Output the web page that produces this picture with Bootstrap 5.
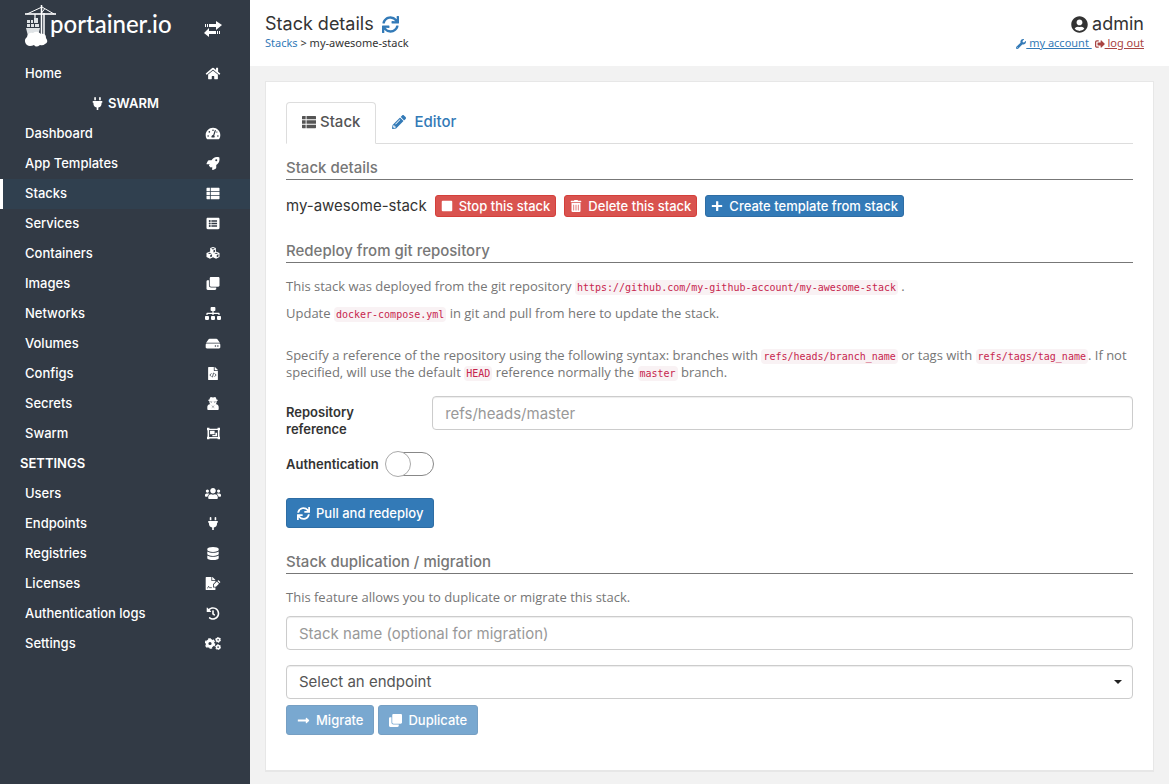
<!DOCTYPE html>
<html lang="en">
<head>
<meta charset="utf-8">
<meta name="viewport" content="width=device-width, initial-scale=1">
<title>Portainer - Stack details</title>
<link href="https://cdn.jsdelivr.net/npm/bootstrap@5.3.0/dist/css/bootstrap.min.css" rel="stylesheet">
<style>
  body { font-family: Inter, "Noto Sans", sans-serif; font-size: 13px; line-height: 17px; color: #333; background: #f2f2f2; }
  .ico { width: 1em; height: 1em; fill: currentColor; flex: none; overflow: visible; }
  .ico-wide { width: 16px; }
  a { color: #337ab7; }

  .side { width: 250px; flex: none; background: #323a45; color: #fff; font-weight: 500; }
  .side-head { height: 59px; padding: 3px 28px 0 24px; }
  .brand { color: #fff; }
  .brand svg { width: 33px; height: 45px; }
  .brand-text { font-family: Lato, sans-serif; font-size: 24px; line-height: 30px; margin: -4px 0 0 -7px; }
  .side .nav-link { height: 30px; padding: 0 22px 2px 22px; color: #fff; border-left: 3px solid transparent; }
  .side .nav-link.active { background: #30404f; border-left-color: #fff; }
  .nav-ico { width: 30px; display: flex; justify-content: center; }
  .side-title { height: 30px; padding-bottom: 2px; font-weight: 600; }

  .top { height: 66px; padding: 13px 25px 0 15px; background: #fff; }
  .top-title { font-size: 18px; line-height: 22px; }
  .top-sub { font-family: "Noto Sans", sans-serif; font-size: 11px; line-height: 16px; }
  .top-title .ico { font-size: 17px; }
  .top-sub .ico { font-size: 10px; }
  .text-logout { color: #a94442; }

  .panel { margin: 15px; padding: 20px 20px 35px; background: #fff; border: 1px solid #e7e7e7; border-bottom-width: 2px; }
  .nav-tabs { --bs-nav-tabs-border-color: #ddd; --bs-nav-tabs-link-active-color: #555; --bs-nav-tabs-link-active-border-color: #ddd #ddd #fff; }
  .nav-tabs .nav-link { font-size: 15px; line-height: 20px; padding: 9px 15px 11px; font-weight: 500; color: #337ab7; border-radius: 4px 4px 0 0; }
  .nav-tabs .nav-link.active { color: #555; }
  .nav-tabs .ico { font-size: 14px; }
  .sect { font-size: 15px; line-height: 20px; color: #777; font-weight: 500; padding-bottom: 1px; border-bottom: 1px solid #777; margin: 24px 0 15px; }
  .sect-first { margin-top: 14px; }
  .note { font-family: "Open Sans", "Noto Sans", sans-serif; color: #767676; margin: 0 0 10px; }
  .note-gap { margin: 25px 0 15px; }
  code { font-family: "DejaVu Sans Mono", monospace; font-size: 10px; line-height: 10px; color: #c7254e; background: #f9f2f4; padding: 2px; border-radius: 4px; }
  .stack-name { font-size: 15px; line-height: 22px; }
  .btn { --bs-btn-font-size: 13px; --bs-btn-line-height: 18px; --bs-btn-border-radius: 3px; --bs-btn-font-weight: 500; --bs-btn-padding-y: 5px; --bs-btn-padding-x: 10px; gap: 6px; }
  .btn-mini { --bs-btn-padding-y: 1px; --bs-btn-padding-x: 5px; }
  .btn-mini .ico { font-size: 12px; }
  .btn-danger { --bs-btn-bg: #d9534f; --bs-btn-border-color: #d43f3a; }
  .btn-primary { --bs-btn-bg: #337ab7; --bs-btn-border-color: #2e6da4; --bs-btn-disabled-bg: #337ab7; --bs-btn-disabled-border-color: #2e6da4; }
  .field-row { --bs-gutter-x: 30px; }
  .field-label { font-weight: 600; }
  .auth-row { margin: 13px 0 21px; gap: 6px; }
  .form-control, .form-select { height: 34px; padding: 6px 12px; font-size: 15px; line-height: 20px; color: #555; border: 1px solid #ccc; border-radius: 4px; box-shadow: inset 0 1px 1px rgba(0,0,0,.075); }
  .form-control { margin-bottom: 15px; }
  .field-row .form-control { margin-bottom: 0; }
  .form-control::placeholder { color: #999; }
  .form-select { background-image: url("data:image/svg+xml,%3Csvg xmlns='http://www.w3.org/2000/svg' viewBox='0 0 8 4'%3E%3Cpath fill='%23222' d='M0 0h8L4 4z'/%3E%3C/svg%3E"); background-size: 8px 4px; background-position: right 10px center; margin-bottom: 6px; }
  .toggle { appearance: none; display: flex; align-items: center; width: 48px; height: 24px; margin: 1px 0 1px 1px; border: 1px solid #888; border-radius: 12px; background: #fff; }
  .toggle::before { content: ""; flex: none; width: 26px; height: 26px; margin-left: -2px; border: 1px solid #aaa; border-radius: 50%; background: #fff; }
  .toggle:checked { justify-content: flex-end; background: #337ab7; }
</style>
</head>
<body>
<svg class="d-none" xmlns="http://www.w3.org/2000/svg">
  <symbol id="home" viewBox="0 0 576 512"><path d="M280.37 148.26L96 300.11V464a16 16 0 0 0 16 16l112.06-.29a16 16 0 0 0 15.92-16V368a16 16 0 0 1 16-16h64a16 16 0 0 1 16 16v95.64a16 16 0 0 0 16 16.05L464 480a16 16 0 0 0 16-16V300L295.67 148.26a12.19 12.19 0 0 0-15.3 0zM571.6 251.47L488 182.56V44.05a12 12 0 0 0-12-12h-56a12 12 0 0 0-12 12v72.61L318.47 43a48 48 0 0 0-61 0L4.34 251.47a12 12 0 0 0-1.6 16.9l25.5 31A12 12 0 0 0 45.15 301l235.22-193.74a12.19 12.19 0 0 1 15.3 0L530.9 301a12 12 0 0 0 16.9-1.6l25.5-31a12 12 0 0 0-1.7-16.93z"/></symbol>
  <symbol id="plug" viewBox="0 0 384 512"><path d="M320,32a32,32,0,0,0-64,0v96h64Zm48,128H16A16,16,0,0,0,0,176v32a16,16,0,0,0,16,16H32v32A160.07,160.07,0,0,0,160,412.8V512h64V412.8A160.07,160.07,0,0,0,352,256V224h16a16,16,0,0,0,16-16V176A16,16,0,0,0,368,160ZM128,32a32,32,0,0,0-64,0v96h64Z"/></symbol>
  <symbol id="gauge" viewBox="0 0 576 512"><path fill-rule="evenodd" d="M288 32C129 32 0 161 0 320c0 53 14 102 39 145 6 10 16 15 27 15h444c11 0 21-5 27-15 25-43 39-92 39-145C576 161 447 32 288 32zM288 96a32 32 0 1 1 0 64 32 32 0 0 1 0-64zM96 384a32 32 0 1 1 0-64 32 32 0 0 1 0 64zM144 224a32 32 0 1 1 0-64 32 32 0 0 1 0 64zM480 384a32 32 0 1 1 0-64 32 32 0 0 1 0 64zM343 416H233a64 64 0 0 1 59-96l61-184a24 24 0 0 1 46 15l-61 184a64 64 0 0 1 5 81zM432 224c-6 0-11-2-15-4l16-49c16 1 31 13 31 21a32 32 0 0 1-32 32z"/></symbol>
  <symbol id="rocket" viewBox="0 0 512 512"><path d="M505.12 19.09c-1.19-5.53-6.66-11-12.21-12.19C460.72 0 435.51 0 410.41 0 307.18 0 245.27 55.2 199.05 128H94.84c-16.35.02-35.56 11.88-42.89 26.48L2.52 253.3A28.4 28.4 0 0 0 0 264a24 24 0 0 0 24 24h103.8l-22.46 22.47c-11.37 11.36-13 32.26 0 45.25l50.9 50.9c11.16 11.19 32.16 13.16 45.28 0L224 384.16V488a24 24 0 0 0 24 24 28.56 28.56 0 0 0 10.7-2.52l98.74-49.39c14.63-7.3 26.5-26.5 26.5-42.86V312.8C456.55 266.48 512 204.39 512 101.7c.08-25.2.08-50.4-6.88-82.61zM384.04 168a40 40 0 1 1 40-40 40 40 0 0 1-40 40z"/></symbol>
  <symbol id="th" viewBox="0 0 512 512"><path d="M24 32h110v126H0V56q0-24 24-24zM166 32h322q24 0 24 24v102H166zM0 190h134v132H0zM166 190h346v132H166zM0 354h134v126H24q-24 0-24-24zM166 354h346v102q0 24-24 24H166z"/></symbol>
  <symbol id="listalt" viewBox="0 0 512 512"><path fill-rule="evenodd" d="M464 480H48c-26.5 0-48-21.500-48-48V80c0-26.500 21.500-48 48-48h416c26.500 0 48 21.500 48 48v352c0 26.500-21.500 48-48 48zM128 120a40 40 0 1 0 0 80 40 40 0 0 0 0-80zm0 96a40 40 0 1 0 0 80 40 40 0 0 0 0-80zm0 96a40 40 0 1 0 0 80 40 40 0 0 0 0-80zM192 132h224v56H192zM192 228h224v56H192zM192 324h224v56H192z"/></symbol>
  <symbol id="cubes" viewBox="0 0 512 512"><path fill-rule="evenodd" d="M256 0l112 44v136l144 56v156l-136 70-120-60-120 60L0 392V236l144-56V44zM256 40l-70 26 70 28 70-28zM274 128v92l58-26v-88zM128 222l-74 28 74 30 74-30zM384 222l-74 28 74 30 74-30zM148 314v92l70-36v-86zM404 314v92l68-36v-86z"/></symbol>
  <symbol id="clone" viewBox="0 0 512 512"><path d="M464 0c26.51 0 48 21.49 48 48v288c0 26.51-21.49 48-48 48H176c-26.51 0-48-21.49-48-48V48c0-26.51 21.49-48 48-48h288M176 416c-44.112 0-80-35.888-80-80V128H48c-26.51 0-48 21.49-48 48v288c0 26.51 21.49 48 48 48h288c26.51 0 48-21.49 48-48v-48H176z"/></symbol>
  <symbol id="sitemap" viewBox="0 0 640 512"><path d="M128 352H32c-17.67 0-32 14.33-32 32v96c0 17.67 14.33 32 32 32h96c17.67 0 32-14.33 32-32v-96c0-17.67-14.33-32-32-32zm-24-80h192v48h48v-48h192v48h48v-57.59c0-21.17-17.23-38.41-38.41-38.41H344v-64h40c17.67 0 32-14.33 32-32V32c0-17.67-14.33-32-32-32H256c-17.67 0-32 14.33-32 32v96c0 17.67 14.33 32 32 32h40v64H94.41C73.23 224 56 241.23 56 262.41V320h48v-48zm264 80h-96c-17.67 0-32 14.33-32 32v96c0 17.67 14.33 32 32 32h96c17.67 0 32-14.33 32-32v-96c0-17.67-14.33-32-32-32zm240 0h-96c-17.67 0-32 14.33-32 32v96c0 17.67 14.33 32 32 32h96c17.67 0 32-14.33 32-32v-96c0-17.67-14.33-32-32-32z"/></symbol>
  <symbol id="hdd" viewBox="0 0 576 512"><path d="M576 304v96c0 26.51-21.49 48-48 48H48c-26.51 0-48-21.49-48-48v-96c0-26.51 21.49-48 48-48h480c26.51 0 48 21.49 48 48zm-48-80a79.557 79.557 0 0 1 30.777 6.165L462.25 85.374A48.003 48.003 0 0 0 422.311 64H153.689a48 48 0 0 0-39.938 21.374L17.223 230.165A79.557 79.557 0 0 1 48 224h480zm-48 96c-17.673 0-32 14.327-32 32s14.327 32 32 32 32-14.327 32-32-14.327-32-32-32zm-96 0c-17.673 0-32 14.327-32 32s14.327 32 32 32 32-14.327 32-32-14.327-32-32-32z"/></symbol>
  <symbol id="filecode" viewBox="0 0 384 512"><path d="M384 122v6H256V0h6c6 0 12 2 17 7l98 98c5 5 7 11 7 17zM248 160c-13 0-24-11-24-24V0H24C11 0 0 11 0 24v464c0 13 11 24 24 24h336c13 0 24-11 24-24V160z"/><path d="M130 250l-62 66 62 66M254 250l62 66-62 66M214 226l-44 180" fill="none" stroke="#323a45" stroke-width="32"/></symbol>
  <symbol id="secret" viewBox="0 0 448 512"><path fill-rule="evenodd" d="M144 0c30 0 50 16 80 16s50-16 80-16c28 0 46 48 58 96 36 8 54 18 54 32 0 12-18 22-48 30v34c0 40-14 70-38 96h38c60 24 80 70 80 120v72c0 18-14 32-32 32H32c-18 0-32-14-32-32v-72c0-50 20-96 80-120h38c-24-26-38-56-38-96v-34c-30-8-48-18-48-30 0-14 18-24 54-32C98 48 116 0 144 0zM112 180c0 40 60 46 92 4h40c32 42 92 36 92-4-70 10-154 10-224 0zM160 330l34 34-20 84 36-64-16-40zM288 330l-34 34 20 84-36-64 16-40z"/></symbol>
  <symbol id="group" viewBox="0 0 512 512"><path fill-rule="evenodd" d="M0 32h96v32h320V32h96v96h-20v256h20v96h-96v-32H96v32H0v-96h20V128H0zM84 120v272h344V120z"/><path d="M120 152h180v130H120zM330 230h66v136H210v-54h120z"/></symbol>
  <symbol id="users" viewBox="0 0 640 512"><path d="M96 224c35.3 0 64-28.7 64-64s-28.7-64-64-64-64 28.7-64 64 28.7 64 64 64zm448 0c35.3 0 64-28.7 64-64s-28.7-64-64-64-64 28.7-64 64 28.7 64 64 64zm32 32h-64c-17.6 0-33.5 7.1-45.1 18.6 40.3 22.1 68.9 62 75.1 109.4h66c17.7 0 32-14.3 32-32v-32c0-35.3-28.7-64-64-64zm-256 0c61.9 0 112-50.1 112-112S381.9 32 320 32 208 82.1 208 144s50.1 112 112 112zm76.8 32h-8.3c-20.8 10-43.9 16-68.5 16s-47.6-6-68.5-16h-8.3C179.6 288 128 339.6 128 403.2V432c0 26.5 21.5 48 48 48h288c26.5 0 48-21.5 48-48v-28.8c0-63.6-51.6-115.2-115.2-115.2zm-223.7-13.4C161.5 263.1 145.6 256 128 256H64c-35.3 0-64 28.7-64 64v32c0 17.7 14.3 32 32 32h65.9c6.3-47.4 34.9-87.3 75.2-109.4z"/></symbol>
  <symbol id="db" viewBox="0 0 448 512"><path d="M448 73.143v45.714C448 159.143 347.667 192 224 192S0 159.143 0 118.857V73.143C0 32.857 100.333 0 224 0s224 32.857 224 73.143zM448 176v102.857C448 319.143 347.667 352 224 352S0 319.143 0 278.857V176c48.125 33.143 136.208 48.572 224 48.572S399.874 209.143 448 176zm0 160v102.857C448 479.143 347.667 512 224 512S0 479.143 0 438.857V336c48.125 33.143 136.208 48.572 224 48.572S399.874 369.143 448 336z"/></symbol>
  <symbol id="sign" viewBox="0 0 576 512"><path d="M248 160c-13 0-24-11-24-24V0H24C11 0 0 11 0 24v464c0 13 11 24 24 24h336c13 0 24-11 24-24v-78h-96V286l96-96v-30zM384 122v6H256V0h6c6 0 12 2 17 7l98 98c5 5 7 11 7 17zM320 300v84h84l120-120-84-84zM463 157l84 84 22-22c10-10 10-24 0-34l-50-50c-10-10-24-10-34 0z"/><path d="M56 432c40 0 44-26 58-68 14 30 14 56 38 56h90" fill="none" stroke="#323a45" stroke-width="30"/></symbol>
  <symbol id="history" viewBox="0 0 512 512"><path d="M504 255.531c.253 136.64-111.18 248.372-247.82 248.468-59.015.042-113.223-20.53-155.822-54.911-11.077-8.94-11.905-25.541-1.839-35.607l11.267-11.267c8.609-8.609 22.353-9.551 31.891-1.984C173.062 425.135 212.781 440 256 440c101.705 0 184-82.311 184-184 0-101.705-82.311-184-184-184-48.814 0-93.149 18.969-126.068 49.932l50.754 50.754c10.08 10.08 2.941 27.314-11.313 27.314H24c-8.837 0-16-7.163-16-16V38.627c0-14.254 17.234-21.393 27.314-11.314l49.372 49.372C129.209 34.136 189.552 8 256 8c136.81 0 247.747 110.78 248 247.531zm-180.912 78.784l9.823-12.63c8.138-10.463 6.253-25.542-4.21-33.679L288 256.349V152c0-13.255-10.745-24-24-24h-16c-13.255 0-24 10.745-24 24v135.651l65.409 50.874c10.463 8.137 25.541 6.253 33.679-4.21z"/></symbol>
  <symbol id="cogs" viewBox="0 0 640 512"><g fill="none" stroke="currentColor"><circle cx="200" cy="256" r="120" stroke-width="112"/><circle cx="200" cy="256" r="184" stroke-width="56" stroke-dasharray="106 87"/><circle cx="524" cy="110" r="64" stroke-width="64"/><circle cx="524" cy="110" r="102" stroke-width="36" stroke-dasharray="60 47"/><circle cx="524" cy="402" r="64" stroke-width="64"/><circle cx="524" cy="402" r="102" stroke-width="36" stroke-dasharray="60 47"/></g></symbol>
  <symbol id="sync" viewBox="0 0 512 512"><path d="M440.65 12.57l4 82.77A247.16 247.16 0 0 0 255.83 8C134.73 8 33.91 94.92 12.29 209.82A12 12 0 0 0 24.09 224h49.05a12 12 0 0 0 11.67-9.26 175.91 175.91 0 0 1 317-56.94l-101.46-4.86a12 12 0 0 0-12.57 12v47.41a12 12 0 0 0 12 12H500a12 12 0 0 0 12-12V12a12 12 0 0 0-12-12h-47.37a12 12 0 0 0-11.98 12.57zM255.83 432a175.61 175.61 0 0 1-146-77.8l101.8 4.87a12 12 0 0 0 12.57-12v-47.4a12 12 0 0 0-12-12H12a12 12 0 0 0-12 12V500a12 12 0 0 0 12 12h47.35a12 12 0 0 0 12-12.6l-4.15-82.57A247.17 247.17 0 0 0 255.83 504c121.11 0 221.93-86.92 243.55-201.82a12 12 0 0 0-11.8-14.18h-49.05a12 12 0 0 0-11.67 9.26A175.86 175.86 0 0 1 255.83 432z"/></symbol>
  <symbol id="user" viewBox="0 0 496 512"><path d="M248 8C111 8 0 119 0 256s111 248 248 248 248-111 248-248S385 8 248 8zm0 96c48.6 0 88 39.4 88 88s-39.4 88-88 88-88-39.4-88-88 39.4-88 88-88zm0 344c-58.7 0-111.3-26.6-146.5-68.2 18.8-35.4 55.6-59.8 98.5-59.8 2.4 0 4.8.4 7.1 1.1 13 4.2 26.6 6.9 40.9 6.9 14.3 0 28-2.7 40.9-6.9 2.3-.7 4.7-1.1 7.1-1.1 42.9 0 79.7 24.4 98.5 59.8C359.3 421.4 306.7 448 248 448z"/></symbol>
  <symbol id="wrench" viewBox="0 0 512 512"><path d="M507.73 109.1c-2.24-9.03-13.54-12.09-20.12-5.51l-74.36 74.36-67.88-11.31-11.31-67.88 74.36-74.36c6.62-6.62 3.43-17.9-5.66-20.16-47.38-11.74-99.55.91-136.58 37.93-39.64 39.64-50.55 97.1-34.05 147.2L18.74 402.76c-24.99 24.99-24.99 65.51 0 90.5 24.99 24.99 65.51 24.99 90.5 0l213.21-213.21c50.12 16.71 107.47 5.68 147.37-34.22 37.07-37.07 49.7-89.32 37.91-136.73zM64 472c-13.25 0-24-10.75-24-24 0-13.26 10.75-24 24-24s24 10.74 24 24c0 13.25-10.75 24-24 24z"/></symbol>
  <symbol id="logout" viewBox="0 0 512 512"><path d="M497 273L329 441c-15 15-41 4.5-41-17v-96H152c-13.3 0-24-10.7-24-24v-96c0-13.3 10.7-24 24-24h136V88c0-21.4 25.9-32 41-17l168 168c9.3 9.4 9.3 24.6 0 34zM192 436v-40c0-6.6-5.4-12-12-12H96c-17.7 0-32-14.3-32-32V160c0-17.7 14.3-32 32-32h84c6.6 0 12-5.4 12-12V76c0-6.6-5.4-12-12-12H96c-53 0-96 43-96 96v192c0 53 43 96 96 96h84c6.6 0 12-5.4 12-12z"/></symbol>
  <symbol id="pencil" viewBox="0 0 512 512"><path d="M497.9 142.1l-46.1 46.1c-4.700 4.700-12.300 4.700-17 0l-111-111c-4.700-4.700-4.700-12.300 0-17l46.1-46.1c18.700-18.700 49.100-18.700 67.900 0l60.100 60.100c18.800 18.700 18.800 49.100 0 67.900zM284.200 99.800L21.600 362.400.4 483.900c-2.900 16.400 11.400 30.600 27.800 27.800l121.500-21.300 262.600-262.600c4.700-4.700 4.700-12.300 0-17l-111-111c-4.800-4.700-12.400-4.700-17.100 0zM124.100 339.900c-5.500-5.500-5.500-14.300 0-19.800l154-154c5.500-5.500 14.300-5.500 19.800 0s5.500 14.300 0 19.800l-154 154c-5.500 5.500-14.300 5.500-19.800 0zM88 424h48v36.300l-64.500 11.300-31.100-31.100L51.700 376H88v48z"/></symbol>
  <symbol id="trash" viewBox="0 0 448 512"><path d="M32 464a48 48 0 0 0 48 48h288a48 48 0 0 0 48-48V128H32zm272-256a16 16 0 0 1 32 0v224a16 16 0 0 1-32 0zm-96 0a16 16 0 0 1 32 0v224a16 16 0 0 1-32 0zm-96 0a16 16 0 0 1 32 0v224a16 16 0 0 1-32 0zM432 32H312l-9.400-18.700A24 24 0 0 0 281.100 0H166.800a23.720 23.720 0 0 0-21.400 13.300L136 32H16A16 16 0 0 0 0 48v32a16 16 0 0 0 16 16h416a16 16 0 0 0 16-16V48a16 16 0 0 0-16-16z"/></symbol>
  <symbol id="stop" viewBox="0 0 448 512"><rect y="32" width="448" height="448" rx="40"/></symbol>
  <symbol id="plus" viewBox="0 0 448 512"><path d="M184 48h80q16 0 16 16v152h152q16 0 16 16v48q0 16-16 16H280v152q0 16-16 16h-80V296H16q-16 0-16-16v-48q0-16 16-16h168z"/></symbol>
  <symbol id="arrow" viewBox="0 0 448 512"><path d="M313.941 216H12c-6.627 0-12 5.373-12 12v56c0 6.627 5.373 12 12 12h301.941v46.059c0 21.382 25.851 32.090 40.971 16.971l86.059-86.059c9.373-9.373 9.373-24.569 0-33.941l-86.059-86.059c-15.119-15.119-40.971-4.411-40.971 16.971V216z"/></symbol>
</svg>

<div class="d-flex min-vh-100">
  <aside class="side">
    <div class="side-head d-flex align-items-start justify-content-between">
      <a class="brand d-flex align-items-center text-decoration-none" href="#">
        <svg viewBox="0 0 33 45" aria-hidden="true">
          <g fill="none" stroke="#fff">
            <path d="M17.500 2v34M20 10v24" stroke-width="1.500"/>
            <path d="M1 11h31" stroke-width="1.600"/>
            <path d="M3 11l15-7 12 7M17.500 10l3-4" stroke-width="1"/>
            <path d="M11 11v6" stroke-width="1.200"/>
          </g>
          <g fill="#dfe3e6">
            <path d="M10 15h4v5h-4zM3 17h3v3H3zM7 17h2v3H7zM3 21h3v3H3zM7 21h3v3H7zM11 21h4v3h-4zM2 25h14l-2 8H4z"/>
          </g>
          <path fill="#fff" d="M6 43a5 5 0 0 1-3-9q1-5 6-4 4-3 8 1 5-1 5 4 3 4-1 6-2 2-5 1-4 3-6 0-2 1-4 1z"/>
        </svg>
        <span class="brand-text">portainer.io</span>
      </a>
      <button class="btn btn-link d-flex p-0 border-0 mt-3" type="button" aria-label="Toggle sidebar">
        <svg width="19" height="18" viewBox="0 0 19 18" fill="#fff"><path d="M2 5h1v3H2zM4 5h1v3H4zM6 5h7V2l6 4-6 5V8H6zM17 12h-1v3h1zM15 12h-1v3h1zM13 12H6V9l-5 5 5 4v-3h7z"/></svg>
      </button>
    </div>
    <nav class="nav flex-column flex-nowrap">
      <a class="nav-link d-flex align-items-center justify-content-between" href="#">Home<span class="nav-ico"><svg class="ico ico-wide"><use href="#home"/></svg></span></a>
      <div class="side-title d-flex align-items-center justify-content-center gap-1"><svg class="ico"><use href="#plug"/></svg>SWARM</div>
      <a class="nav-link d-flex align-items-center justify-content-between" href="#">Dashboard<span class="nav-ico"><svg class="ico ico-wide"><use href="#gauge"/></svg></span></a>
      <a class="nav-link d-flex align-items-center justify-content-between" href="#">App Templates<span class="nav-ico"><svg class="ico ico-wide"><use href="#rocket"/></svg></span></a>
      <a class="nav-link active d-flex align-items-center justify-content-between" href="#">Stacks<span class="nav-ico"><svg class="ico ico-wide"><use href="#th"/></svg></span></a>
      <a class="nav-link d-flex align-items-center justify-content-between" href="#">Services<span class="nav-ico"><svg class="ico ico-wide"><use href="#listalt"/></svg></span></a>
      <a class="nav-link d-flex align-items-center justify-content-between" href="#">Containers<span class="nav-ico"><svg class="ico ico-wide"><use href="#cubes"/></svg></span></a>
      <a class="nav-link d-flex align-items-center justify-content-between" href="#">Images<span class="nav-ico"><svg class="ico ico-wide"><use href="#clone"/></svg></span></a>
      <a class="nav-link d-flex align-items-center justify-content-between" href="#">Networks<span class="nav-ico"><svg class="ico ico-wide"><use href="#sitemap"/></svg></span></a>
      <a class="nav-link d-flex align-items-center justify-content-between" href="#">Volumes<span class="nav-ico"><svg class="ico ico-wide"><use href="#hdd"/></svg></span></a>
      <a class="nav-link d-flex align-items-center justify-content-between" href="#">Configs<span class="nav-ico"><svg class="ico ico-wide"><use href="#filecode"/></svg></span></a>
      <a class="nav-link d-flex align-items-center justify-content-between" href="#">Secrets<span class="nav-ico"><svg class="ico ico-wide"><use href="#secret"/></svg></span></a>
      <a class="nav-link d-flex align-items-center justify-content-between" href="#">Swarm<span class="nav-ico"><svg class="ico"><use href="#group"/></svg></span></a>
      <div class="side-title d-flex align-items-center ps-3 ms-1">SETTINGS</div>
      <a class="nav-link d-flex align-items-center justify-content-between" href="#">Users<span class="nav-ico"><svg class="ico ico-wide"><use href="#users"/></svg></span></a>
      <a class="nav-link d-flex align-items-center justify-content-between" href="#">Endpoints<span class="nav-ico"><svg class="ico ico-wide"><use href="#plug"/></svg></span></a>
      <a class="nav-link d-flex align-items-center justify-content-between" href="#">Registries<span class="nav-ico"><svg class="ico ico-wide"><use href="#db"/></svg></span></a>
      <a class="nav-link d-flex align-items-center justify-content-between" href="#">Licenses<span class="nav-ico"><svg class="ico ico-wide"><use href="#sign"/></svg></span></a>
      <a class="nav-link d-flex align-items-center justify-content-between" href="#">Authentication logs<span class="nav-ico"><svg class="ico ico-wide"><use href="#history"/></svg></span></a>
      <a class="nav-link d-flex align-items-center justify-content-between" href="#">Settings<span class="nav-ico"><svg class="ico ico-wide"><use href="#cogs"/></svg></span></a>
    </nav>
  </aside>

  <div class="flex-grow-1">
    <header class="top d-flex justify-content-between">
      <div>
        <div class="top-title d-flex align-items-center gap-2">Stack details <a class="d-flex" href="#" aria-label="Refresh"><svg class="ico"><use href="#sync"/></svg></a></div>
        <div class="top-sub"><a class="text-decoration-none" href="#">Stacks</a> &gt; my-awesome-stack</div>
      </div>
      <div class="text-end">
        <div class="top-title d-flex align-items-center justify-content-end gap-1"><svg class="ico"><use href="#user"/></svg>admin</div>
        <div class="top-sub"><a href="#"><svg class="ico"><use href="#wrench"/></svg> my account&nbsp;</a> <a class="text-logout" href="#"><svg class="ico"><use href="#logout"/></svg> log out</a></div>
      </div>
    </header>

    <main class="panel">
      <ul class="nav nav-tabs">
        <li class="nav-item"><a class="nav-link active d-flex align-items-center gap-1" href="#"><svg class="ico"><use href="#th"/></svg>Stack</a></li>
        <li class="nav-item"><a class="nav-link d-flex align-items-center gap-2" href="#"><svg class="ico"><use href="#pencil"/></svg>Editor</a></li>
      </ul>

      <h2 class="sect sect-first">Stack details</h2>
      <div class="d-flex flex-wrap gap-2">
        <span class="stack-name">my-awesome-stack</span>
        <button class="btn btn-danger btn-mini d-flex align-items-center" type="button"><svg class="ico"><use href="#stop"/></svg>Stop this stack</button>
        <button class="btn btn-danger btn-mini d-flex align-items-center" type="button"><svg class="ico"><use href="#trash"/></svg>Delete this stack</button>
        <button class="btn btn-primary btn-mini d-flex align-items-center" type="button"><svg class="ico"><use href="#plus"/></svg>Create template from stack</button>
      </div>

      <h2 class="sect">Redeploy from git repository</h2>
      <p class="note">This stack was deployed from the git repository <code>https://github.com/my-github-account/my-awesome-stack</code> .</p>
      <p class="note">Update <code>docker-compose.yml</code> in git and pull from here to update the stack.</p>
      <p class="note note-gap">Specify a reference of the repository using the following syntax: branches with <code>refs/heads/branch_name</code> or tags with <code>refs/tags/tag_name</code>. If not specified, will use the default <code>HEAD</code> reference normally the <code>master</code> branch.</p>

      <form>
        <div class="row field-row">
          <label class="col-2 field-label pt-2" for="ref">Repository reference</label>
          <div class="col-10"><input class="form-control" id="ref" type="text" placeholder="refs/heads/master"></div>
        </div>
        <div class="auth-row d-flex align-items-center">
          <label class="field-label" for="auth">Authentication</label>
          <input class="toggle" id="auth" type="checkbox" role="switch">
        </div>
        <button class="btn btn-primary d-flex align-items-center" type="button"><svg class="ico"><use href="#sync"/></svg>Pull and redeploy</button>
      </form>

      <h2 class="sect">Stack duplication / migration</h2>
      <form>
        <p class="note">This feature allows you to duplicate or migrate this stack.</p>
        <input class="form-control" type="text" placeholder="Stack name (optional for migration)" aria-label="Stack name">
        <select class="form-select" aria-label="Endpoint"><option>Select an endpoint</option></select>
        <div class="d-flex gap-1">
          <button class="btn btn-primary d-flex align-items-center" type="button" disabled><svg class="ico"><use href="#arrow"/></svg>Migrate</button>
          <button class="btn btn-primary d-flex align-items-center" type="button" disabled><svg class="ico"><use href="#clone"/></svg>Duplicate</button>
        </div>
      </form>
    </main>
  </div>
</div>
<script src="https://cdn.jsdelivr.net/npm/bootstrap@5.3.0/dist/js/bootstrap.bundle.min.js"></script>
</body>
</html>
